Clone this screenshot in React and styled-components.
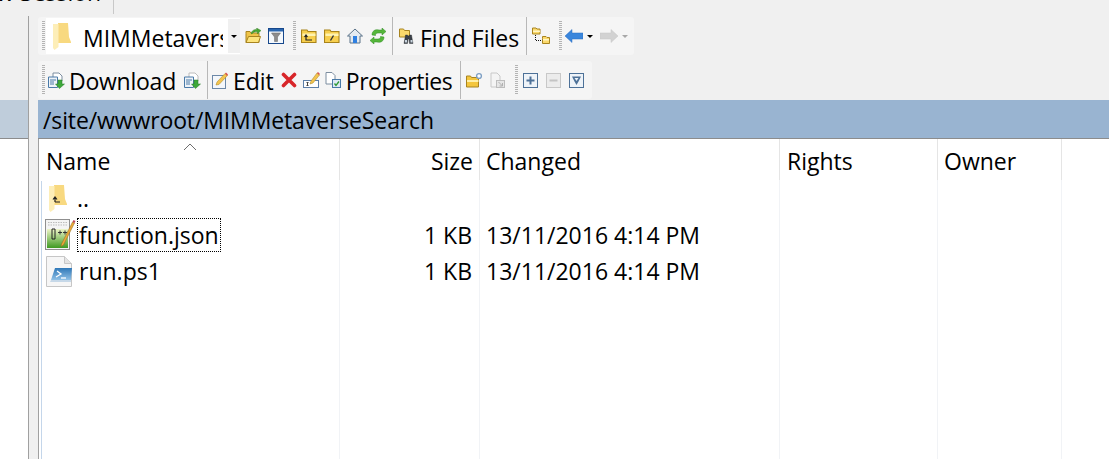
import styled, { createGlobalStyle } from "styled-components";

const GlobalStyle = createGlobalStyle`
  html, body {
    margin: 0;
    padding: 0;
    height: 100%;
    overflow: hidden;
    background: #f0f0f0;
  }
  #root { height: 100%; }
`;

// icons, all drawn on a 16x16 box

const FolderBody = () => (
  <>
    <path d="M.5 4V2h5.500L7 3.500h8v11H.5z" fill="#f7cf4e" stroke="#a8831a" strokeWidth="1.100" />
    <rect x="1.500" y="5.500" width="13" height="2.500" fill="#fff3b0" />
  </>
);

const FolderOpenGreen = () => (
  <svg width="16" height="16" viewBox="0 0 16 16">
    <path d="M1 5.500V3.500h4l1 1.500h8v9.500H1z" fill="#f0c448" stroke="#a88420" />
    <path d="M1 14.500l2.500-6h12l-2 6z" fill="#fde47c" stroke="#a88420" />
    <path d="M6 5.500C7 2 10 1 12 1.500L11.500 0 16 2.500 12.500 6 12.500 4C10.500 3.500 8 4 7 6z" fill="#4aa532" stroke="#2f7d22" strokeWidth=".4" />
  </svg>
);

const FilterBox = () => (
  <svg width="16" height="16" viewBox="0 0 16 16">
    <rect x=".5" y=".5" width="15" height="15" fill="#f4f8fc" stroke="#17488c" />
    <rect x="1" y="1" width="14" height="2.500" fill="#2a67b0" />
    <path d="M3.500 5h9L9.500 9v4.500h-3V9z" fill="#8c8c8c" stroke="#666" strokeWidth=".5" />
  </svg>
);

const FolderUp = () => (
  <svg width="16" height="16" viewBox="0 0 16 16">
    <FolderBody />
    <path d="M5 7.500v4.500h6M3.500 9L5 7l1.500 2" fill="none" stroke="#222" strokeWidth="1.200" />
  </svg>
);

const FolderRoot = () => (
  <svg width="16" height="16" viewBox="0 0 16 16">
    <FolderBody />
    <path d="M9.500 7.500L6.500 12.500" stroke="#333" strokeWidth="1.400" />
  </svg>
);

const Home = () => (
  <svg width="16" height="16" viewBox="0 0 16 16">
    <path d="M8 1L.5 8H3v7h10V8h2.500z" fill="#e4eaf0" stroke="#5a7288" />
    <rect x="6" y="8" width="4" height="7" fill="#2f7fe0" />
  </svg>
);

const Refresh = () => (
  <svg width="16" height="16" viewBox="0 0 16 16">
    <path d="M2 7C2 3 5 1 9 2h3V0l4 3.500L12 7V5H8C6 5 5.500 6 5.500 7.500z" fill="#55b63a" stroke="#2f8a24" strokeWidth=".5" />
    <path d="M14 9c0 4-3 6-7 5H4v2L0 12.500 4 9v2h4c2 0 2.500-1 2.500-2.500z" fill="#55b63a" stroke="#2f8a24" strokeWidth=".5" />
  </svg>
);

const FindFolder = () => (
  <svg width="17" height="17" viewBox="0 0 17 17">
    <path d="M.5 3V1h4l1 1.500h5V9H.5z" fill="#fbd96b" stroke="#a88420" />
    <path d="M6.500 7h2l.5 1h1l.5-1h2l.5 3 1 5.500h-3.500L10 11H9l-.5 4.500H5L6 10z" fill="#3b4048" stroke="#22252a" strokeWidth=".4" />
    <rect x="6" y="12" width="2" height="2.500" fill="#c8d4de" />
    <rect x="11.500" y="12" width="2" height="2.500" fill="#c8d4de" />
  </svg>
);

const FolderTree = () => (
  <svg width="18" height="18" viewBox="0 0 18 18">
    <path d="M.5 3V1h3.500l1 1h3v5H.5z" fill="#fbd96b" stroke="#a88420" />
    <rect x="1" y="3.500" width="7" height="1.500" fill="#fff6c4" />
    <path d="M10.500 11.500V9.500h3.500l1 1h2.500v6h-7z" fill="#fbd96b" stroke="#a88420" />
    <rect x="11" y="12" width="6" height="1.500" fill="#fff6c4" />
    <path d="M3.500 8v5.500h6" fill="none" stroke="#111" strokeDasharray="1 1" />
  </svg>
);

const ArrowLeft = () => (
  <svg width="18" height="14" viewBox="0 0 18 14">
    <path d="M0 7l7-6.500V4h11v6H7v3.500z" fill="#3a86dc" stroke="#2a6cc0" strokeWidth=".5" />
  </svg>
);

const ArrowRight = () => (
  <svg width="18" height="14" viewBox="0 0 18 14">
    <path d="M18 7l-7-6.500V4H0v6h11v3.500z" fill="#d2d2d2" stroke="#c6c6c6" strokeWidth=".5" />
  </svg>
);

const DownloadDoc = ({ pale }) => (
  <svg width="17" height="17" viewBox="0 0 17 17">
    <path d="M5 1h6l3 3v5H5z" fill="#fff" stroke={pale ? "#bcbcbc" : "#7d8ea0"} />
    <path d="M.5 5h9v10.500h-9z" fill="#eef3f8" stroke="#4a7aa8" />
    <path d="M2 8h6M2 10h4M2 12h4" stroke="#4a7aa8" />
    <path d="M10 8v4H7.500l4 4.500 5-4.500H14V8z" fill="#3ea83a" stroke="#2a7d28" strokeWidth=".5" />
  </svg>
);

const EditDoc = () => (
  <svg width="17" height="17" viewBox="0 0 17 17">
    <rect x=".5" y="3.500" width="13" height="13" fill="#f4f7fb" stroke="#6c88a8" />
    <path d="M4 13l1-3 8-8.500 2.500 2L7 12.500z" fill="#f3c44e" stroke="#a8841e" strokeWidth=".5" />
    <path d="M13 1.500l1-1 2 2-1 1.500z" fill="#d9534f" />
  </svg>
);

const DeleteX = () => (
  <svg width="16" height="16" viewBox="0 0 16 16">
    <path d="M2.500 2.500l11 11M13.500 2.500l-11 11" stroke="#d8262a" strokeWidth="3.600" strokeLinecap="round" />
  </svg>
);

const RenameBox = () => (
  <svg width="17" height="17" viewBox="0 0 17 17">
    <rect x=".5" y="8.500" width="15" height="7" fill="#fff" stroke="#5d7fa8" />
    <path d="M3.500 10.500h2M4.500 10.500v3M3.500 13.500h2" stroke="#444" />
    <path d="M7 12l1-3 6-8 2.500 2-6.500 8z" fill="#f3c44e" stroke="#a8841e" strokeWidth=".5" />
    <path d="M14 1l1-1 2 2-1 1z" fill="#d9534f" />
  </svg>
);

const PropsDoc = () => (
  <svg width="17" height="17" viewBox="0 0 17 17">
    <path d="M1 .5h6l3 3V12H1z" fill="#fff" stroke="#7d8ea0" />
    <rect x="7.500" y="7.500" width="8" height="8" fill="#dfeaf6" stroke="#4a7aa8" />
    <path d="M9.500 11.500l1.500 2 3-4" fill="none" stroke="#2e9a36" strokeWidth="1.300" />
  </svg>
);

const NewFolder = () => (
  <svg width="17" height="17" viewBox="0 0 17 17">
    <path d="M.5 6V4h4l1 1.500h7V15H.5z" fill="#f4c63d" stroke="#a88420" />
    <rect x="1" y="8" width="11.500" height="2" fill="#fff0a8" />
    <circle cx="13" cy="4" r="2.400" fill="#fff" stroke="#7fa0c4" strokeWidth="1.400" />
  </svg>
);

const MoveDoc = () => (
  <svg width="17" height="17" viewBox="0 0 17 17">
    <path d="M2 1h6l3 3v11H2z" fill="#f4f4f4" stroke="#c8c8c8" />
    <rect x="7.500" y="8.500" width="8" height="7" fill="#e6e6e6" stroke="#bdbdbd" />
    <path d="M9.500 10l4 4M13.500 11v3h-3" fill="none" stroke="#b0b0b0" />
  </svg>
);

const BoxIcon = ({ children, muted }) => (
  <svg width="15" height="15" viewBox="0 0 15 15">
    <rect x=".5" y=".5" width="14" height="14" fill={muted ? "#ececec" : "#eef3f8"} stroke={muted ? "#c8c8c8" : "#4d7198"} />
    {children}
  </svg>
);

const Plus = () => (
  <BoxIcon>
    <path d="M7.500 3.500v8M3.500 7.500h8" stroke="#4d7198" strokeWidth="2" />
  </BoxIcon>
);

const Minus = () => (
  <BoxIcon muted>
    <path d="M3.500 7.500h8" stroke="#c4c4c4" strokeWidth="2" />
  </BoxIcon>
);

const FilterDown = () => (
  <BoxIcon>
    <path d="M3 3.500h9L9.500 8.500 7.500 12l-2-3.500z" fill="#4d7198" />
    <path d="M5.500 5h4L7.500 8z" fill="#eef3f8" />
  </BoxIcon>
);

const PlainFolder = ({ children }) => (
  <svg width="18" height="27" viewBox="0 0 18 27">
    <path d="M5 0h10l1 14 2 5v1H5z" fill="#f8d980" />
    <path d="M0 1h5.500v23l-4 3L0 25z" fill="#fdeeb8" />
    {children}
  </svg>
);

const JsonFile = () => (
  <svg width="31" height="33" viewBox="0 0 31 33">
    <defs>
      <linearGradient id="jsonGreen" x1="0" y1="0" x2="0" y2="1">
        <stop offset="0" stopColor="#eef5c8" />
        <stop offset="1" stopColor="#3f9a22" />
      </linearGradient>
    </defs>
    <rect x=".5" y="1.500" width="24" height="30" fill="#f4f4f4" stroke="#8f8f8f" />
    <path d="M3 4.500h19M3 7h19" stroke="#bcbcbc" strokeDasharray="1.500 1" />
    <rect x="2" y="11" width="21" height="19" fill="url(#jsonGreen)" />
    <path d="M7 11h3v10H7z" fill="none" stroke="#222" />
    <path d="M13 14.500h4M15 12.500v4M18 14.500h4M20 12.500v4" stroke="#333" />
    <path d="M16.500 26l11-22 2 1-11 22-2.500 1.500z" fill="#eda83a" stroke="#8b6a1a" strokeWidth=".5" />
    <path d="M27.500 4l1-2 2 1-1 2z" fill="#c0485c" />
  </svg>
);

const ScriptFile = () => (
  <svg width="28" height="31" viewBox="0 0 28 31">
    <defs>
      <linearGradient id="psBlue" x1="0" y1="0" x2="0" y2="1">
        <stop offset="0" stopColor="#2f78b8" />
        <stop offset="1" stopColor="#8fc0e6" />
      </linearGradient>
    </defs>
    <path d="M.5.5h18l7 7v23H.5z" fill="#f6f6f6" stroke="#c6c6c6" />
    <path d="M18.500.5v7h7" fill="#e4e4e4" stroke="#c6c6c6" />
    <path d="M9 12h17l-1 12H5z" fill="url(#psBlue)" />
    <path d="M5 24h20v2H4z" fill="#c6d8e8" />
    <path d="M11 15l4 3-5 3" fill="none" stroke="#fff" strokeWidth="1.300" />
    <path d="M15 22h5" stroke="#fff" strokeWidth="1.300" />
  </svg>
);

const SortCaret = styled.svg`
  position: absolute;
  top: 4px;
  left: 140px;
`;

// data

const COLUMNS = [
  { title: "Name", width: 297, pad: "2px 0 0 3px", cells: [] },
  { title: "Size", width: 140, pad: "2px 6px 0 0", cellPad: "0 7px 0 0", right: true, cells: ["", "1 KB", "1 KB"] },
  { title: "Changed", width: 300, pad: "2px 0 0 6px", cellPad: "0 0 0 6px", cells: ["", "13/11/2016 4:14 PM", "13/11/2016 4:14 PM"] },
  { title: "Rights", width: 158, pad: "2px 0 0 7px", cells: [] },
  { title: "Owner", width: 124, pad: "2px 0 0 6px", cells: [] },
];

const FILES = [
  {
    name: "..",
    iconPad: 6,
    nudge: -2,
    icon: (
      <PlainFolder>
        <path d="M6 17v-4M4 14.500L6 12l2 2.500M6 17h5" fill="none" stroke="#222" strokeWidth="1.200" />
      </PlainFolder>
    ),
  },
  { name: "function.json", iconPad: 2, icon: <JsonFile />, focused: true },
  { name: "run.ps1", iconPad: 3, icon: <ScriptFile /> },
];

export default function App() {
  return (
    <>
      <GlobalStyle />
      <Window>
        <TopStrip>
          <ClippedText>New Session</ClippedText>
          <TopDivider />
        </TopStrip>
        <Panes>
          <SidePane>
            <SideTitle />
            <SideBody />
          </SidePane>
          <MainPane>
            <ToolRow $h={44}>
              <Band>
                <Grip />
                <Combo>
                  <ComboFolder><PlainFolder /></ComboFolder>
                  <ComboText>MIMMetaverseSearch</ComboText>
                  <ComboButton><Caret /></ComboButton>
                </Combo>
                <Tool $ml={1}><FolderOpenGreen /></Tool>
                <Tool><FilterBox /></Tool>
                <Grip $ml={6} />
                <Tool $ml={1}><FolderUp /></Tool>
                <Tool><FolderRoot /></Tool>
                <Tool><Home /></Tool>
                <Tool><Refresh /></Tool>
                <Sep $ml={3} />
                <TextTool $ml={6}><FindFolder /><Label $pt={4}>Find Files</Label></TextTool>
                <Sep $ml={7} />
                <Tool $w={24} $ml={2}><FolderTree /></Tool>
                <Grip $ml={6} />
                <Tool $w={22} $ml={1}><ArrowLeft /></Tool>
                <ToolCaret><Caret /></ToolCaret>
                <Tool $w={22} $ml={3}><ArrowRight /></Tool>
                <ToolCaret><Caret $muted /></ToolCaret>
              </Band>
            </ToolRow>
            <ToolRow $h={40}>
              <Band>
                <Grip />
                <TextTool $ml={3}><DownloadDoc /><Label $pt={2} $ls={-0.25}>Download</Label></TextTool>
                <Tool $ml={5}><DownloadDoc pale /></Tool>
                <Sep $ml={3} />
                <TextTool $ml={4}><EditDoc /><Label $pt={2}>Edit</Label></TextTool>
                <Tool $ml={4}><DeleteX /></Tool>
                <Tool $ml={-1}><RenameBox /></Tool>
                <TextTool $ml={2}><PropsDoc /><Label $pt={2} $ls={-0.5}>Properties</Label></TextTool>
                <Sep $ml={8} />
                <Tool $ml={2}><NewFolder /></Tool>
                <Tool><MoveDoc /></Tool>
                <Grip $ml={6} />
                <Tool $ml={1}><Plus /></Tool>
                <Tool><Minus /></Tool>
                <Tool><FilterDown /></Tool>
              </Band>
            </ToolRow>
            <PathBar>/site/wwwroot/MIMMetaverseSearch</PathBar>
            <FileList>
              {COLUMNS.map((col, i) => (
                <Column key={col.title} $w={col.width} $first={i === 0}>
                  <HeaderCell $pad={col.pad} $right={col.right}>
                    {col.title}
                    {i === 0 && (
                      <SortCaret width="14" height="8" viewBox="0 0 14 8">
                        <path d="M1 7l6-6 6 6" fill="none" stroke="#6d6d6d" />
                      </SortCaret>
                    )}
                  </HeaderCell>
                  {i === 0 &&
                    FILES.map((file) => (
                      <NameRow key={file.name}>
                        <FileIcon $pl={file.iconPad}>{file.icon}</FileIcon>
                        <FileName $focused={file.focused} $ml={file.nudge}>{file.name}</FileName>
                      </NameRow>
                    ))}
                  {col.cells.map((text, j) => (
                    <DataCell key={j} $pad={col.cellPad || col.pad} $right={col.right}>
                      {text}
                    </DataCell>
                  ))}
                </Column>
              ))}
              <LastColumn />
            </FileList>
          </MainPane>
        </Panes>
      </Window>
    </>
  );
}

// styles

const Window = styled.div`
  width: 1109px;
  height: 459px;
  overflow: hidden;
  display: flex;
  flex-direction: column;
  background: #f0f0f0;
  font-family: "Open Sans", "Noto Sans", sans-serif;
  font-size: 23px;
  color: #000;
`;

const TopStrip = styled.div`
  height: 16px;
  flex: none;
  display: flex;
  overflow: hidden;
`;

const ClippedText = styled.div`
  width: 113px;
  flex: none;
  margin: -23px 0 0 -34px;
  white-space: nowrap;
  line-height: 30px;
`;

const TopDivider = styled.div`
  width: 1px;
  height: 14px;
  margin-left: 34px;
  background: #c8c8c8;
`;

const Panes = styled.div`
  flex: 1;
  display: flex;
  min-height: 0;
`;

const SidePane = styled.div`
  width: 29px;
  flex: none;
  display: flex;
  flex-direction: column;
  padding-top: 84px;
  border-right: 1px solid #a0a0a0;
  box-sizing: border-box;
`;

const SideTitle = styled.div`
  height: 39px;
  flex: none;
  background: #bfcddb;
  border-bottom: 1px solid #8c8c8c;
  box-sizing: border-box;
`;

const SideBody = styled.div`
  flex: 1;
  background: #fff;
`;

const MainPane = styled.div`
  flex: 1;
  min-width: 0;
  margin-left: 9px;
  display: flex;
  flex-direction: column;
`;

const ToolRow = styled.div`
  height: ${(p) => p.$h}px;
  flex: none;
  display: flex;
  padding-top: 1px;
  box-sizing: border-box;
`;

const Band = styled.div`
  display: flex;
  align-items: center;
  height: 38px;
  padding: 0 4px;
  background: #f5f5f5;
  border-radius: 3px;
`;

const Grip = styled.div`
  width: 3px;
  height: 30px;
  flex: none;
  margin-left: ${(p) => p.$ml || 0}px;
  background: repeating-linear-gradient(to bottom, #b4b4b4 0 1px, transparent 1px 2px);
`;

const Combo = styled.div`
  width: 194px;
  height: 36px;
  flex: none;
  margin-left: 1px;
  display: flex;
  align-items: center;
  background: #fff;
`;

const ComboFolder = styled.div`
  width: 37px;
  flex: none;
  padding-left: 7px;
  box-sizing: border-box;
  display: flex;
`;

const ComboText = styled.div`
  width: 140px;
  flex: none;
  padding-top: 4px;
  overflow: hidden;
  white-space: nowrap;
`;

const ComboButton = styled.div`
  width: 12px;
  height: 34px;
  flex: none;
  margin-left: 5px;
  display: flex;
  align-items: center;
  justify-content: center;
  background: #f0f0f0;
`;

const Caret = styled.div`
  width: 0;
  height: 0;
  border-left: 3px solid transparent;
  border-right: 3px solid transparent;
  border-top: 3px solid ${(p) => (p.$muted ? "#a8a8a8" : "#000")};
`;

const Tool = styled.div`
  width: ${(p) => p.$w || 23}px;
  height: 30px;
  flex: none;
  margin-left: ${(p) => p.$ml || 0}px;
  display: flex;
  align-items: center;
  justify-content: center;
`;

const ToolCaret = styled.div`
  width: 10px;
  flex: none;
  display: flex;
  justify-content: center;
`;

const TextTool = styled.div`
  display: flex;
  flex: none;
  align-items: center;
  gap: 4px;
  margin-left: ${(p) => p.$ml || 0}px;
`;

const Label = styled.span`
  padding-top: ${(p) => p.$pt || 0}px;
  letter-spacing: ${(p) => p.$ls || 0}px;
  white-space: nowrap;
`;

const Sep = styled.div`
  width: 1px;
  height: 38px;
  flex: none;
  margin-left: ${(p) => p.$ml || 0}px;
  background: #b8b8b8;
`;

const PathBar = styled.div`
  height: 39px;
  flex: none;
  padding: 2px 0 0 5px;
  display: flex;
  align-items: center;
  box-sizing: border-box;
  letter-spacing: -0.12px;
  background: #99b4d1;
  border-bottom: 1px solid #8c8c8c;
`;

const FileList = styled.div`
  flex: 1;
  min-height: 0;
  display: flex;
  padding-left: 4px;
  background: #fff;
  border-left: 1px solid #a0a0a0;
  box-sizing: border-box;
`;

const Column = styled.div`
  width: ${(p) => p.$w}px;
  flex: none;
  box-sizing: border-box;
  display: flex;
  flex-direction: column;
  border-right: 1px solid #f1f3f6;
  ${(p) => p.$first && "box-shadow: -2px 41px 0 -1px #fff, -3px 41px 0 -1px #c4d6ea;"}
`;

const LastColumn = styled.div`
  flex: 1;
`;

const HeaderCell = styled.div`
  position: relative;
  height: 41px;
  flex: none;
  box-sizing: border-box;
  padding: ${(p) => p.$pad};
  display: flex;
  align-items: center;
  justify-content: ${(p) => (p.$right ? "flex-end" : "flex-start")};
  box-shadow: 1px 0 0 #e5e5e5;
`;

const DataCell = styled.div`
  height: 36.5px;
  flex: none;
  box-sizing: border-box;
  padding: ${(p) => p.$pad};
  display: flex;
  align-items: center;
  justify-content: ${(p) => (p.$right ? "flex-end" : "flex-start")};
`;

const NameRow = styled.div`
  height: 36.5px;
  flex: none;
  display: flex;
  align-items: center;
`;

const FileIcon = styled.div`
  width: 34px;
  flex: none;
  padding-left: ${(p) => p.$pl}px;
  box-sizing: border-box;
  display: flex;
`;

const FileName = styled.div`
  margin-left: ${(p) => p.$ml || 0}px;
  padding: 0 1px;
  height: 34px;
  line-height: 32px;
  box-sizing: border-box;
  border: 1px dotted ${(p) => (p.$focused ? "#000" : "transparent")};
`;
